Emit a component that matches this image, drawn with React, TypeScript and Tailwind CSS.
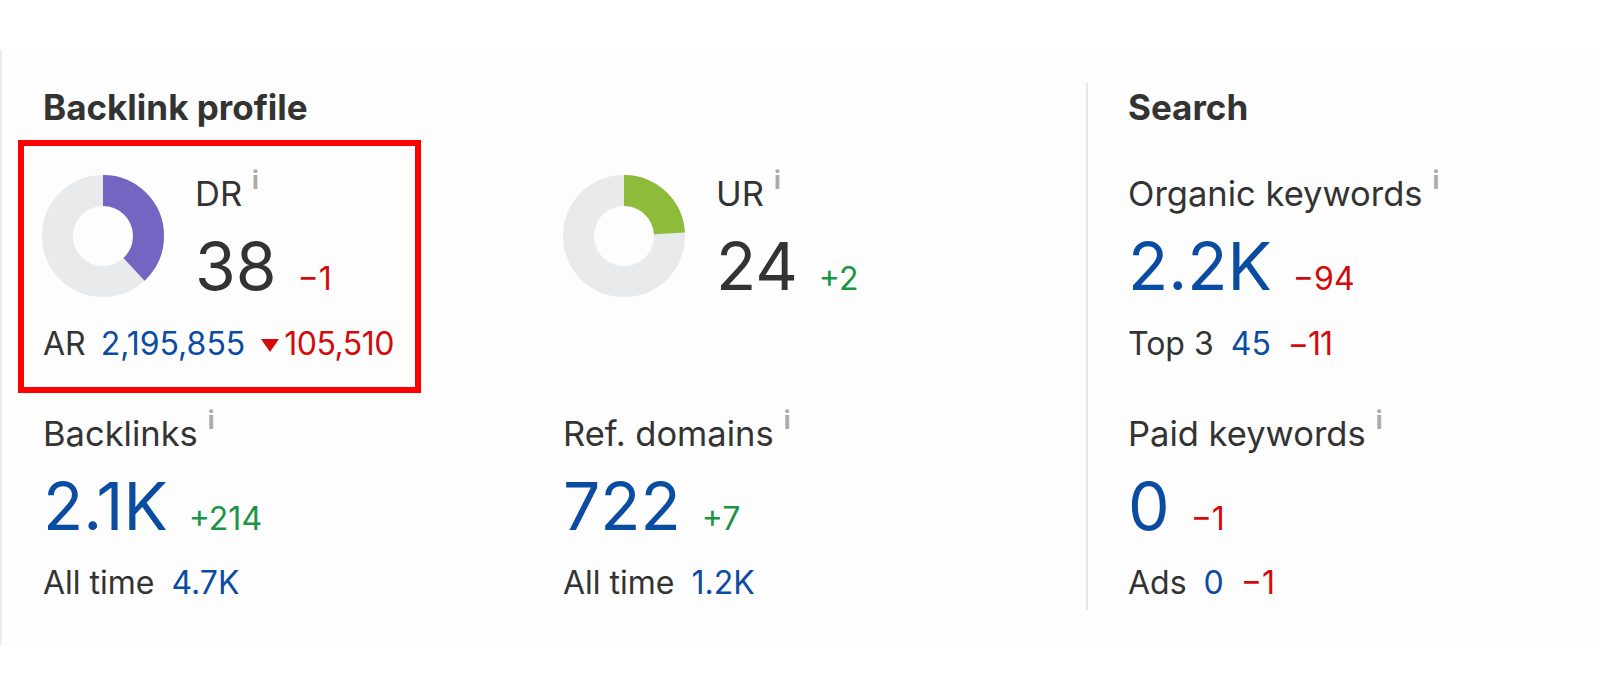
import React from "react";

const FONT = { fontFamily: "Inter, 'Noto Sans', sans-serif" };

function Donut({ pct, color }: { pct: number; color: string }) {
  const r = 45.5;
  const c = 2 * Math.PI * r;
  return (
    <svg width="122" height="122" viewBox="0 0 122 122" className="shrink-0">
      <circle cx="61" cy="61" r={r} fill="none" stroke="#e9eaec" strokeWidth="31" />
      <circle
        cx="61"
        cy="61"
        r={r}
        fill="none"
        stroke={color}
        strokeWidth="31"
        strokeDasharray={`${(pct / 100) * c} ${c}`}
        transform="rotate(-90 61 61)"
      />
    </svg>
  );
}

function Label({ text }: { text: string }) {
  return (
    <div className="flex items-start">
      <span className="text-[34.5px] leading-[40px] text-[#333333]">{text}</span>
      <span className="ml-[10px] -mt-[6px] text-[25px] leading-[24px] font-bold text-[#ababab]">i</span>
    </div>
  );
}

function BigValue({ value, delta, blue, deltaColor }: { value: string; delta: string; blue: boolean; deltaColor: string }) {
  return (
    <div className="flex items-baseline gap-[21px]">
      <span className={`text-[66px] leading-[66px] ${blue ? "text-[#0b4ca3]" : "text-[#333333]"}`}>{value}</span>
      <span className={`text-[32px] leading-[40px] ${deltaColor}`}>{delta}</span>
    </div>
  );
}

export default function App() {
  const red = "text-[#d40a0a]";
  const green = "text-[#1a9445]";
  return (
    <div className="w-[1600px] h-[700px] bg-white pt-[50px]" style={FONT}>
      <div className="relative h-[595px] bg-[#fdfdfd] border-l-2 border-[#ececec] flex pt-[33px]">
        {/* Backlink profile */}
        <div className="w-[1084px] pl-[41px] pt-[4px]">
          <h2 className="text-[35px] leading-[40px] font-bold text-[#333333]">Backlink profile</h2>
          <div className="grid grid-cols-[520px_1fr] mt-[47px]">
            <div>
              <div className="flex">
                <div className="-ml-[1px] mt-[1px]">
                  <Donut pct={38} color="#7565c2" />
                </div>
                <div className="ml-[31px]">
                  <Label text="DR" />
                  <div className="mt-[19px]">
                    <BigValue value="38" delta="−1" blue={false} deltaColor={red} />
                  </div>
                </div>
              </div>
              <div className="mt-[25px] flex items-baseline text-[32px] leading-[40px]">
                <span className="text-[#333333]">AR</span>
                <span className="ml-[15px] text-[#0b4ca3]">2,195,855</span>
                <svg width="18" height="13" viewBox="0 0 18 13" className="ml-[16px] self-center mt-[2px]">
                  <polygon points="0,0 18,0 9,13" fill="#d40a0a" />
                </svg>
                <span className={`ml-[5px] tracking-[-0.5px] ${red}`}>105,510</span>
              </div>
              <div className="mt-[50px]">
                <Label text="Backlinks" />
                <div className="mt-[19px]">
                  <BigValue value="2.1K" delta="+214" blue deltaColor={green} />
                </div>
                <div className="mt-[24px] flex items-baseline gap-[17px] text-[32px] leading-[40px]">
                  <span className="text-[#333333]">All time</span>
                  <span className="text-[#0b4ca3]">4.7K</span>
                </div>
              </div>
            </div>
            <div>
              <div className="flex">
                <div className="mt-[1px]">
                  <Donut pct={24} color="#8fbb3a" />
                </div>
                <div className="ml-[31px]">
                  <Label text="UR" />
                  <div className="mt-[19px]">
                    <BigValue value="24" delta="+2" blue={false} deltaColor={green} />
                  </div>
                </div>
              </div>
              <div className="h-[65px]" />
              <div className="mt-[50px]">
                <Label text="Ref. domains" />
                <div className="mt-[19px]">
                  <BigValue value="722" delta="+7" blue deltaColor={green} />
                </div>
                <div className="mt-[24px] flex items-baseline gap-[17px] text-[32px] leading-[40px]">
                  <span className="text-[#333333]">All time</span>
                  <span className="text-[#0b4ca3]">1.2K</span>
                </div>
              </div>
            </div>
          </div>
        </div>
        {/* Search */}
        <div className="h-[527px] border-l-2 border-[#e6e6e6] pl-[40px] pt-[4px]">
          <h2 className="text-[35px] leading-[40px] font-bold text-[#333333]">Search</h2>
          <div className="mt-[47px]">
            <Label text="Organic keywords" />
            <div className="mt-[19px]">
              <BigValue value="2.2K" delta="−94" blue deltaColor={red} />
            </div>
            <div className="mt-[25px] flex items-baseline gap-[17px] text-[32px] leading-[40px]">
              <span className="text-[#333333]">Top 3</span>
              <span className="text-[#0b4ca3]">45</span>
              <span className={`tracking-[-1px] ${red}`}>−11</span>
            </div>
          </div>
          <div className="mt-[50px]">
            <Label text="Paid keywords" />
            <div className="mt-[19px]">
              <BigValue value="0" delta="−1" blue deltaColor={red} />
            </div>
            <div className="mt-[24px] flex items-baseline gap-[17px] text-[32px] leading-[40px]">
              <span className="text-[#333333]">Ads</span>
              <span className="text-[#0b4ca3]">0</span>
              <span className={red}>−1</span>
            </div>
          </div>
        </div>
        {/* annotation box */}
        <div className="absolute left-[16px] top-[90px] w-[403px] h-[253px] border-[6px] border-[#ff0000]" />
      </div>
    </div>
  );
}
